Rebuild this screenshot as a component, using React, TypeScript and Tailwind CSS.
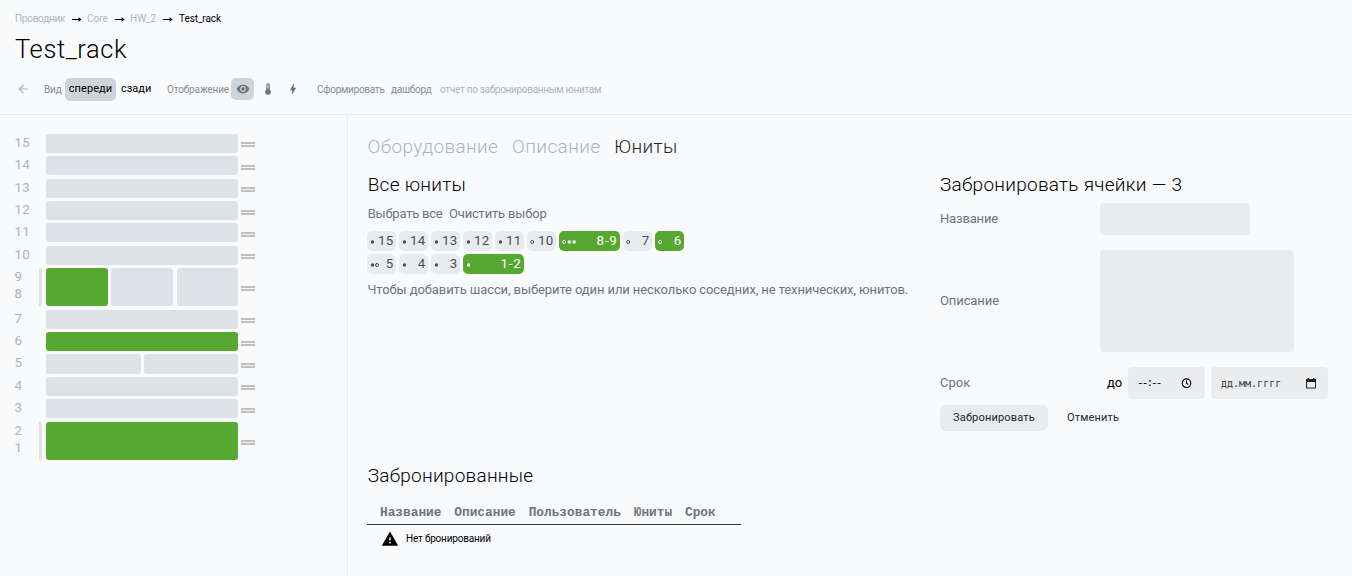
import type { ReactNode } from "react";
import { MdArrowBack, MdVisibility, MdWarning, MdBolt, MdDeviceThermostat } from "react-icons/md";

type Row = { units: string[]; slot: string; cells: string[]; handle: string };

const full = "w-[192px] bg-[#dee1e6]";
const fullGreen = "w-[192px] bg-[#57a830]";
const low = "pt-[9px]";
const high = "pt-[8px]";

const rows: Row[] = [
  { units: ["15"], slot: "h-[22px]", cells: [full], handle: high },
  { units: ["14"], slot: "h-[23px]", cells: [full], handle: low },
  { units: ["13"], slot: "h-[22px]", cells: [full], handle: high },
  { units: ["12"], slot: "h-[22px]", cells: [full], handle: low },
  { units: ["11"], slot: "h-[23px]", cells: [full], handle: low },
  { units: ["10"], slot: "h-[22px]", cells: [full], handle: high },
  {
    units: ["9", "8"],
    slot: "h-[42px]",
    cells: ["w-[62px] mr-[3px] bg-[#57a830]", "w-[62px] mr-[4px] bg-[#dee1e6]", "w-[61px] bg-[#dee1e6]"],
    handle: "pt-[18px]",
  },
  { units: ["7"], slot: "h-[22px]", cells: [full], handle: high },
  { units: ["6"], slot: "h-[22px]", cells: [fullGreen], handle: low },
  {
    units: ["5"],
    slot: "h-[23px]",
    cells: ["w-[95px] mr-[3px] bg-[#dee1e6]", "w-[94px] bg-[#dee1e6]"],
    handle: low,
  },
  { units: ["4"], slot: "h-[22px]", cells: [full], handle: high },
  { units: ["3"], slot: "h-[23px]", cells: [full], handle: low },
  { units: ["2", "1"], slot: "h-[42px]", cells: [fullGreen], handle: "pt-[18px]" },
];

function RackRow({ row }: { row: Row }) {
  const tall = row.units.length > 1;
  return (
    <div className={`flex items-start ${row.slot}`}>
      <div className="w-[25px] pl-[0.5px] text-[13.3px] leading-[17px] tracking-[0.4px] text-[#adb5bd]">
        {row.units.map((u) => (
          <div key={u}>{u}</div>
        ))}
      </div>
      <div className={`mr-[4px] h-[38px] w-[3px] ${tall ? "bg-[#dee1e6]" : "invisible"}`} />
      <div className={`mr-[3px] flex ${tall ? "h-[38px]" : row.units[0] === "5" ? "h-[20px]" : "h-[19px]"}`}>
        {row.cells.map((c, i) => (
          <div key={i} className={`rounded-[3px] ${c}`} />
        ))}
      </div>
      <div className={`flex flex-col gap-px ${row.handle}`}>
        <div className="h-[2px] w-[14px] bg-[#c0c0c0]" />
        <div className="h-[2px] w-[14px] bg-[#c0c0c0]" />
      </div>
    </div>
  );
}

type Unit = { label: string; dots: string; wide?: boolean; on?: boolean };

const unitRows: Unit[][] = [
  [
    { label: "15", dots: "f" },
    { label: "14", dots: "f" },
    { label: "13", dots: "f" },
    { label: "12", dots: "f" },
    { label: "11", dots: "f" },
    { label: "10", dots: "o" },
    { label: "8-9", dots: "off", wide: true, on: true },
    { label: "7", dots: "o" },
    { label: "6", dots: "o", on: true },
  ],
  [
    { label: "5", dots: "fo" },
    { label: "4", dots: "f" },
    { label: "3", dots: "f" },
    { label: "1-2", dots: "f", wide: true, on: true },
  ],
];

function Chip({ unit }: { unit: Unit }) {
  return (
    <div
      className={`flex h-5 items-center justify-between rounded-[5px] pr-[2.5px] ${unit.wide ? "w-[61px]" : "w-[29px]"} ${
        unit.on ? "bg-[#57a830] text-white" : "bg-[#e9ecef] text-[#495057]"
      }`}
    >
      <svg width="14" height="6" viewBox="0 0 14 6" className="-mr-[6px] ml-[3px] mt-px shrink-0">
        {unit.dots.split("").map((d, i) =>
          d === "f" ? (
            <circle key={i} cx={2.5 + i * 4.8} cy="3" r="1.7" fill="currentColor" />
          ) : (
            <circle key={i} cx={2.2 + i * 4.8} cy="3" r="1.5" fill="none" stroke="currentColor" />
          ),
        )}
      </svg>
      <span className={`text-[13.3px] leading-5 ${unit.wide ? "tracking-[0.8px]" : "tracking-[0.4px]"}`}>
        {unit.label}
      </span>
    </div>
  );
}

function Arrow() {
  return (
    <svg width="10" height="6" viewBox="0 0 10 6" className="shrink-0" fill="none" stroke="#000">
      <path d="M0 3.5H9" />
      <path d="M6.5 1.3L9.6 3.5L6.5 5.7Z" fill="#000" stroke="none" />
    </svg>
  );
}

function Heading({ children }: { children: ReactNode }) {
  return (
    <h2 className="whitespace-nowrap text-[19px] font-light leading-6 tracking-[0.26px] text-black">{children}</h2>
  );
}

function Header() {
  return (
    <header className="h-[115px] border-b border-[#e9ecef] pl-[15px] pt-[12px]">
      <nav className="flex h-[14px] items-center whitespace-nowrap text-[10px] leading-[14px] text-[#adb5bd]">
        <span className="w-[57px] tracking-[-0.27px]">Проводник</span>
        <Arrow />
        <span className="ml-[5px] w-[28px]">Core</span>
        <Arrow />
        <span className="ml-[5px] w-[33px]">HW_2</span>
        <Arrow />
        <span className="ml-[6px] tracking-[-0.08px] text-black">Test_rack</span>
      </nav>
      <h1 className="mt-[7px] text-[25.5px] font-light leading-8 tracking-[0.6px] text-black">Test_rack</h1>
      <div className="mt-[13px] flex h-[23px] items-center whitespace-nowrap text-[10px] leading-[14px] text-[#868e96]">
        <MdArrowBack className="mb-px ml-px mr-[14px] size-[14px] text-[#adb5bd]" />
        <span className="w-[21px] pt-px tracking-[-0.15px]">Вид</span>
        <span className="flex h-[23px] w-[51px] justify-center rounded-[5px] bg-[#ced4da] pt-[4px] text-[11px] tracking-[0.08px] text-black">
          спереди
        </span>
        <span className="ml-[5px] w-[46px] pb-px text-[11px] text-black">сзади</span>
        <span className="w-[64px] pt-px tracking-[-0.13px]">Отображение</span>
        <span className="flex h-[22px] w-[23px] items-center justify-center self-start rounded-[5px] bg-[#ced4da] text-[#6c757d]">
          <MdVisibility className="size-[14px]" />
        </span>
        <MdDeviceThermostat className="mb-px ml-[7px] size-[14px] text-[#6c757d]" />
        <MdBolt className="mb-px ml-[11px] mr-[17px] size-[14px] text-[#6c757d]" />
        <span className="w-[74px] pt-px tracking-[-0.28px]">Сформировать</span>
        <span className="w-[49px] tracking-[-0.26px]">дашборд</span>
        <span className="tracking-[-0.29px] text-[#adb5bd]">отчет по забронированным юнитам</span>
      </div>
    </header>
  );
}

function BookingForm() {
  return (
    <section className="w-[392px] shrink-0 pt-[58px] text-[13px] leading-4 text-[#6c757d]">
      <Heading>Забронировать ячейки — 3</Heading>
      <div className="mt-[6px] flex h-[32px] items-center">
        <span className="w-[160px] tracking-[-0.17px]">Название</span>
        <div className="h-[32px] w-[150px] rounded-[4px] bg-[#e9ecef]" />
      </div>
      <div className="mt-[15px] flex h-[102px] items-center">
        <span className="w-[160px] tracking-[-0.1px]">Описание</span>
        <div className="h-[102px] w-[194px] rounded-[4px] bg-[#e9ecef]" />
      </div>
      <div className="mt-[15px] flex h-[32px] items-center">
        <span className="w-[167px]">Срок</span>
        <span className="w-[21px] tracking-[-0.1px] text-black">до</span>
        <div className="flex h-[32px] w-[77px] items-center justify-between rounded-[4px] bg-[#ebecee] pl-[9px] pr-[13px] font-['Liberation_Mono'] text-[11px] tracking-[-1.9px] text-black">
          <span>--:--</span>
          <svg width="11" height="11" viewBox="0 0 11 11" fill="none" stroke="#000" strokeWidth="1.1">
            <circle cx="5.5" cy="5.2" r="4.3" />
            <path d="M5.5 2.5V5.3L7.3 6.6" />
          </svg>
        </div>
        <div className="ml-[6px] flex h-[32px] w-[117px] items-center justify-between rounded-[4px] bg-[#ebecee] pl-[10px] pr-[12px] font-['DejaVu_Sans_Mono'] text-[10px] text-[#343a40]">
          <span className="pt-px">дд.мм.гггг</span>
          <svg width="10" height="11" viewBox="0 0 10 11">
            <path d="M0 1H10V10.5H0ZM1 4V9.5H9V4Z" fill="#222" fillRule="evenodd" />
            <path d="M1.5 0H3V2H1.5ZM7 0H8.5V2H7Z" fill="#222" />
          </svg>
        </div>
      </div>
      <div className="mt-[6px] flex h-[26px] items-center text-[11px] text-[#212529]">
        <div className="flex h-[26px] w-[108px] items-center justify-center rounded-[6px] bg-[#e9ecef] pb-px tracking-[0.19px]">
          Забронировать
        </div>
        <div className="ml-[19px] pb-px tracking-[0.15px]">Отменить</div>
      </div>
    </section>
  );
}

export default function App() {
  return (
    <div className="h-[576px] w-[1352px] overflow-hidden bg-[#f8fafc] font-['Roboto',sans-serif]">
      <Header />
      <div className="flex h-[461px]">
        <aside className="w-[348px] shrink-0 border-r border-[#e9ecef] pl-[14px] pt-[19px]">
          {rows.map((row) => (
            <RackRow key={row.units[0]} row={row} />
          ))}
        </aside>
        <main className="w-[592px] shrink-0 pl-[19px] pt-[20px]">
          <div className="flex h-6 whitespace-nowrap pl-[0.5px] text-[19px] font-light leading-6 text-[#adb5bd]">
            <span className="w-[144.5px] tracking-[0.36px]">Оборудование</span>
            <span className="w-[102px] tracking-[0.38px]">Описание</span>
            <span className="tracking-[0.3px] text-[#212529]">Юниты</span>
          </div>
          <div className="mt-[14px] pl-[0.7px]">
            <Heading>Все юниты</Heading>
          </div>
          <div className="mt-[9px] flex whitespace-nowrap pl-[0.7px] text-[13px] leading-4 text-[#6c757d]">
            <span className="w-[81.3px] tracking-[-0.22px]">Выбрать все</span>
            <span className="tracking-[-0.18px]">Очистить выбор</span>
          </div>
          <div className="mt-[9px] flex flex-col gap-[3px]">
            {unitRows.map((units, i) => (
              <div key={i} className="flex gap-[3px]">
                {units.map((u) => (
                  <Chip key={u.label} unit={u} />
                ))}
              </div>
            ))}
          </div>
          <p className="mt-[8px] whitespace-nowrap pl-[0.5px] text-[13px] leading-4 tracking-[-0.1px] text-[#6c757d]">
            Чтобы добавить шасси, выберите один или несколько соседних, не технических, юнитов.
          </p>
          <div className="mt-[166px] pl-[0.7px]">
            <Heading>Забронированные</Heading>
          </div>
          <div className="mt-[17px] flex h-[20px] w-[374px] gap-[12.9px] whitespace-nowrap border-b border-[#343a40] pl-[13px] font-['Liberation_Mono'] text-[12.8px] font-bold leading-4 text-[#6c757d]">
            <span>Название</span>
            <span>Описание</span>
            <span>Пользователь</span>
            <span>Юниты</span>
            <span>Срок</span>
          </div>
          <div className="mt-[5px] flex h-[18px] items-center pl-[14px] text-[10px] tracking-[-0.19px] text-black">
            <MdWarning className="mr-[7px] size-[18px]" />
            <span className="pb-px">Нет бронирований</span>
          </div>
        </main>
        <BookingForm />
      </div>
    </div>
  );
}
